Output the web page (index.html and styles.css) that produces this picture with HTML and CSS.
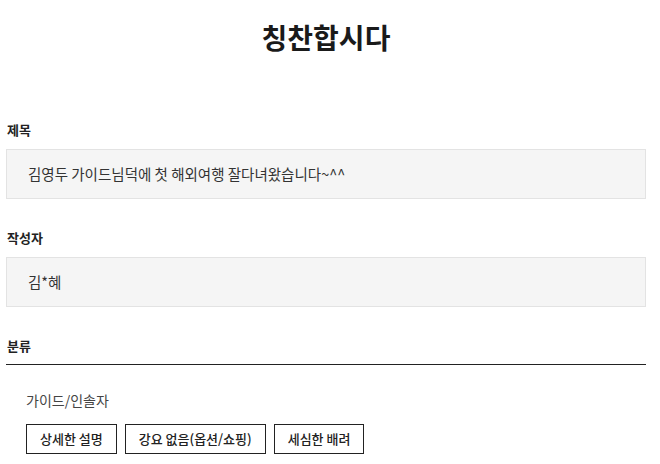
FILE: index.html
```html
<!DOCTYPE html>
<html>
<head>
    <link rel="stylesheet" href="styles.css">
</head>
<body>
    <div class="container">
        <h1 class="title">칭찬합시다</h1>

        <div class="field">
            <div class="label">제목</div>
            <div class="box">김영두 가이드님덕에 첫 해외여행 잘다녀왔습니다~^^</div>
        </div>

        <div class="field">
            <div class="label">작성자</div>
            <div class="box">김*혜</div>
        </div>

        <div class="field last">
            <div class="label label-line">분류</div>
            <div class="category">
                <p class="cat-name">가이드/인솔자</p>
                <div class="tags">
                    <span class="tag">상세한 설명</span>
                    <span class="tag">강요 없음(옵션/쇼핑)</span>
                    <span class="tag">세심한 배려</span>
                </div>
            </div>
        </div>
    </div>
</body>
</html>
```

FILE: styles.css
```css
body {
    font-family: "Noto Sans CJK KR", "Noto Sans", sans-serif;
    background-color: #fff;
    color: #222;
    margin: 0;
    padding: 0;
}
.container {
    width: 640px;
    margin: 0 6px;
}
.title {
    text-align: center;
    font-size: 28px;
    font-weight: 700;
    color: #1a1a1a;
    margin: 0;
    padding-top: 17px;
    height: 115px;
    line-height: 40px;
    box-sizing: border-box;
}
.field {
    margin-bottom: 24px;
}
.field.last {
    margin-bottom: 0;
}
.label {
    font-size: 13px;
    font-weight: 700;
    line-height: 20px;
    padding: 5px 1px 9px;
    color: #222;
}
.label-line {
    border-bottom: 1px solid #222;
    padding-bottom: 8px;
}
.box {
    height: 48px;
    line-height: 48px;
    padding: 0 21px;
    background-color: #f5f5f5;
    border: 1px solid #e3e3e3;
    font-size: 14.5px;
    color: #333;
}
.category {
    padding: 24px 20px 0;
}
.cat-name {
    margin: 0 0 13px;
    font-size: 14px;
    line-height: 22px;
    color: #444;
}
.tags {
    display: flex;
    gap: 8px;
}
.tag {
    border: 1px solid #222;
    height: 28px;
    line-height: 27px;
    padding: 0 13px;
    font-size: 13px;
    font-weight: 500;
    color: #222;
}
```
